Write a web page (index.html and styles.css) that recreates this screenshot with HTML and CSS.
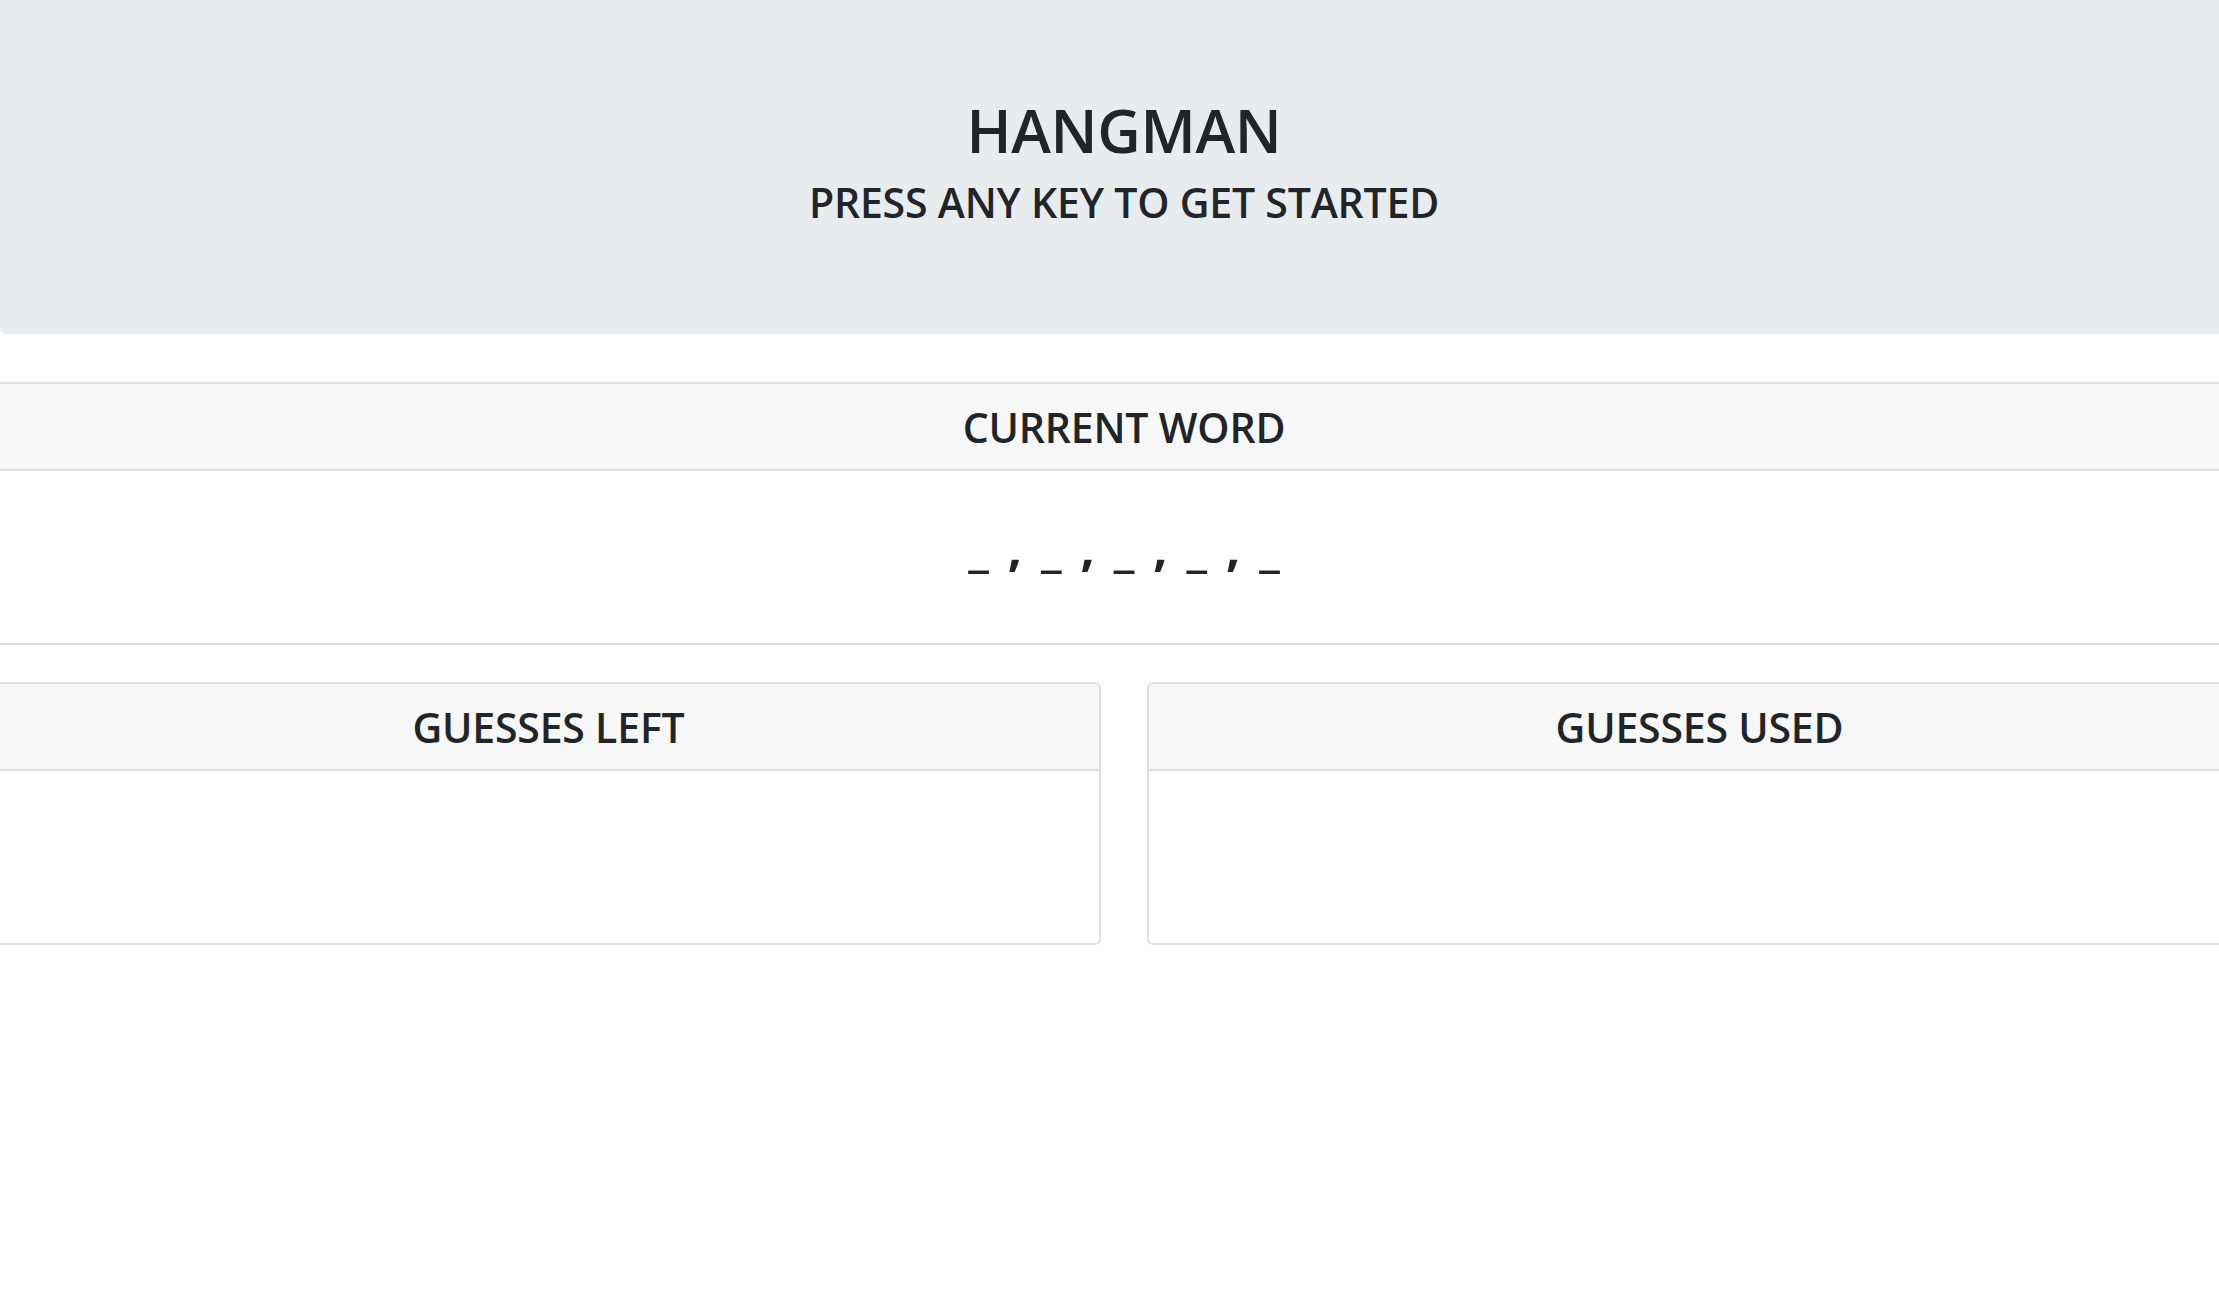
FILE: index.html
```html
<!DOCTYPE html>
<html lang="en">
<head>
<meta charset="utf-8">
<title>Hangman</title>
<link rel="stylesheet" href="styles.css">
</head>
<body>
<div class="page">
  <header class="jumbo">
    <h1 class="title">HANGMAN</h1>
    <h3 class="subtitle">PRESS ANY KEY TO GET STARTED</h3>
  </header>
  <main class="content">
    <section class="card card-word">
      <div class="card-header"><h3>CURRENT WORD</h3></div>
      <div class="card-body word-body"><span class="word">_ , _ , _ , _ , _</span></div>
    </section>
    <div class="row">
      <section class="card">
        <div class="card-header"><h3>GUESSES LEFT</h3></div>
        <div class="card-body"></div>
      </section>
      <section class="card">
        <div class="card-header"><h3>GUESSES USED</h3></div>
        <div class="card-body"></div>
      </section>
    </div>
  </main>
</div>
</body>
</html>
```
FILE: styles.css
```css
html, body {
  margin: 0;
  padding: 0;
  overflow: hidden;
  background: #ffffff;
}
body {
  font-family: "Open Sans", "Noto Sans", sans-serif;
  color: #212529;
}
.page {
  width: 2248px;
}
.jumbo {
  height: 334px;
  box-sizing: border-box;
  background: #e9ecef;
  border-radius: 0 0 7px 7px;
  padding-top: 94px;
  text-align: center;
}
.title {
  margin: 0;
  font-size: 60px;
  line-height: 72px;
  font-weight: 600;
  letter-spacing: -0.3px;
}
.subtitle {
  margin: 12px 0 0;
  font-size: 41px;
  line-height: 49px;
  font-weight: 600;
  letter-spacing: -0.2px;
}
.content {
  margin: 48px -4px 0;
  display: flex;
  flex-direction: column;
  gap: 37px;
}
.card {
  border: 2px solid #dfdfdf;
  border-radius: 6px;
  background: #fff;
  overflow: hidden;
}
.card-header {
  background: #f7f7f7;
  border-bottom: 2px solid #dfdfdf;
  height: 85px;
  display: flex;
  align-items: center;
  justify-content: center;
}
.card-header h3 {
  margin: 0;
  padding-top: 2px;
  font-size: 41px;
  line-height: 49px;
  font-weight: 600;
  letter-spacing: -0.2px;
}
.card-body {
  height: 172px;
}
.word-body {
  display: flex;
  align-items: center;
  justify-content: center;
}
.word {
  font-size: 50px;
  font-weight: 700;
  line-height: 56px;
  word-spacing: 6px;
  padding-bottom: 20px;
}
.row {
  display: grid;
  grid-template-columns: 1fr 1fr;
  gap: 46px;
}
```
